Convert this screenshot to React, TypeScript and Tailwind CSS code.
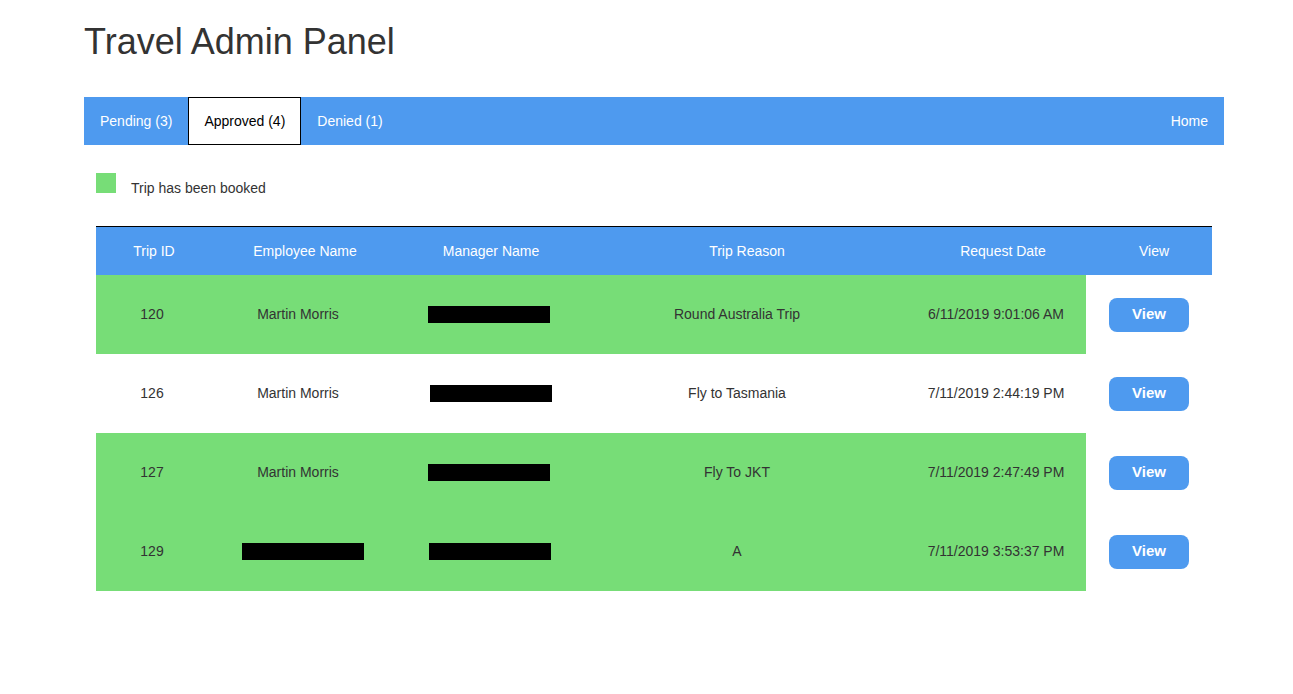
import React from 'react'

type Trip = {
  id: number
  employee: string | null
  reason: string
  date: string
  booked: boolean
}

const trips: Trip[] = [
  { id: 120, employee: 'Martin Morris', reason: 'Round Australia Trip', date: '6/11/2019 9:01:06 AM', booked: true },
  { id: 126, employee: 'Martin Morris', reason: 'Fly to Tasmania', date: '7/11/2019 2:44:19 PM', booked: false },
  { id: 127, employee: 'Martin Morris', reason: 'Fly To JKT', date: '7/11/2019 2:47:49 PM', booked: true },
  { id: 129, employee: null, reason: 'A', date: '7/11/2019 3:53:37 PM', booked: true },
]

// blacked-out names, as in the screenshot
const managerOffset: Record<number, string> = {
  120: 'ml-0',
  126: 'ml-[4px]',
  127: 'ml-0',
  129: 'ml-[2px]',
}

const Redacted = ({ className = '' }: { className?: string }) => (
  <div className={`h-[17px] w-[122px] bg-black ${className}`}></div>
)

const App = () => {
  return (
    <div className="min-h-screen bg-white text-[#333] font-['Liberation_Sans',Arial,sans-serif]">
      <div className="ml-[84px] w-[1140px] pt-[22px]">
        <h1 className="text-[36px] leading-[40px] font-normal text-[#333]">Travel Admin Panel</h1>

        {/* Tabs */}
        <nav className="mt-[35px] flex h-[48px] items-stretch bg-[#4e9aef] text-[14px]">
          <a className="flex items-center px-4 text-white">Pending (3)</a>
          <a className="flex items-center border border-black bg-white px-[15px] text-black">Approved (4)</a>
          <a className="flex items-center px-4 text-white">Denied (1)</a>
          <a className="ml-auto flex items-center px-4 text-white">Home</a>
        </nav>

        {/* Legend */}
        <div className="mt-[28px] flex items-start pl-3">
          <div className="h-5 w-5 bg-[#77dd77]"></div>
          <span className="ml-[15px] mt-[5px] text-[14px]">Trip has been booked</span>
        </div>

        {/* Table */}
        <div className="mx-3 mt-[27px] border-t border-black">
          <div className="flex h-[48px] items-center bg-[#4e9aef] text-center text-[14px] text-white">
            <div className="w-[116px]">Trip ID</div>
            <div className="w-[186px]">Employee Name</div>
            <div className="w-[186px]">Manager Name</div>
            <div className="w-[326px]">Trip Reason</div>
            <div className="w-[186px]">Request Date</div>
            <div className="w-[116px]">View</div>
          </div>

          {trips.map((t) => (
            <div key={t.id} className="flex h-[79px] items-center text-center text-[14px] text-[#333]">
              <div className={`flex h-full w-[990px] items-center ${t.booked ? 'bg-[#77dd77]' : 'bg-white'}`}>
                <div className="w-[112px]">{t.id}</div>
                <div className="flex w-[180px] justify-center">
                  {t.employee ? t.employee : <Redacted className="ml-[10px]" />}
                </div>
                <div className="flex w-[202px] justify-center">
                  <Redacted className={managerOffset[t.id]} />
                </div>
                <div className="w-[294px]">{t.reason}</div>
                <div className="w-[202px] pl-[22px]">{t.date}</div>
              </div>
              <div className="flex w-[126px] justify-center">
                <button className="h-[34px] w-[80px] rounded-lg bg-[#4e9aef] text-[15px] font-bold text-white">
                  View
                </button>
              </div>
            </div>
          ))}
        </div>
      </div>
    </div>
  )
}

export default App
